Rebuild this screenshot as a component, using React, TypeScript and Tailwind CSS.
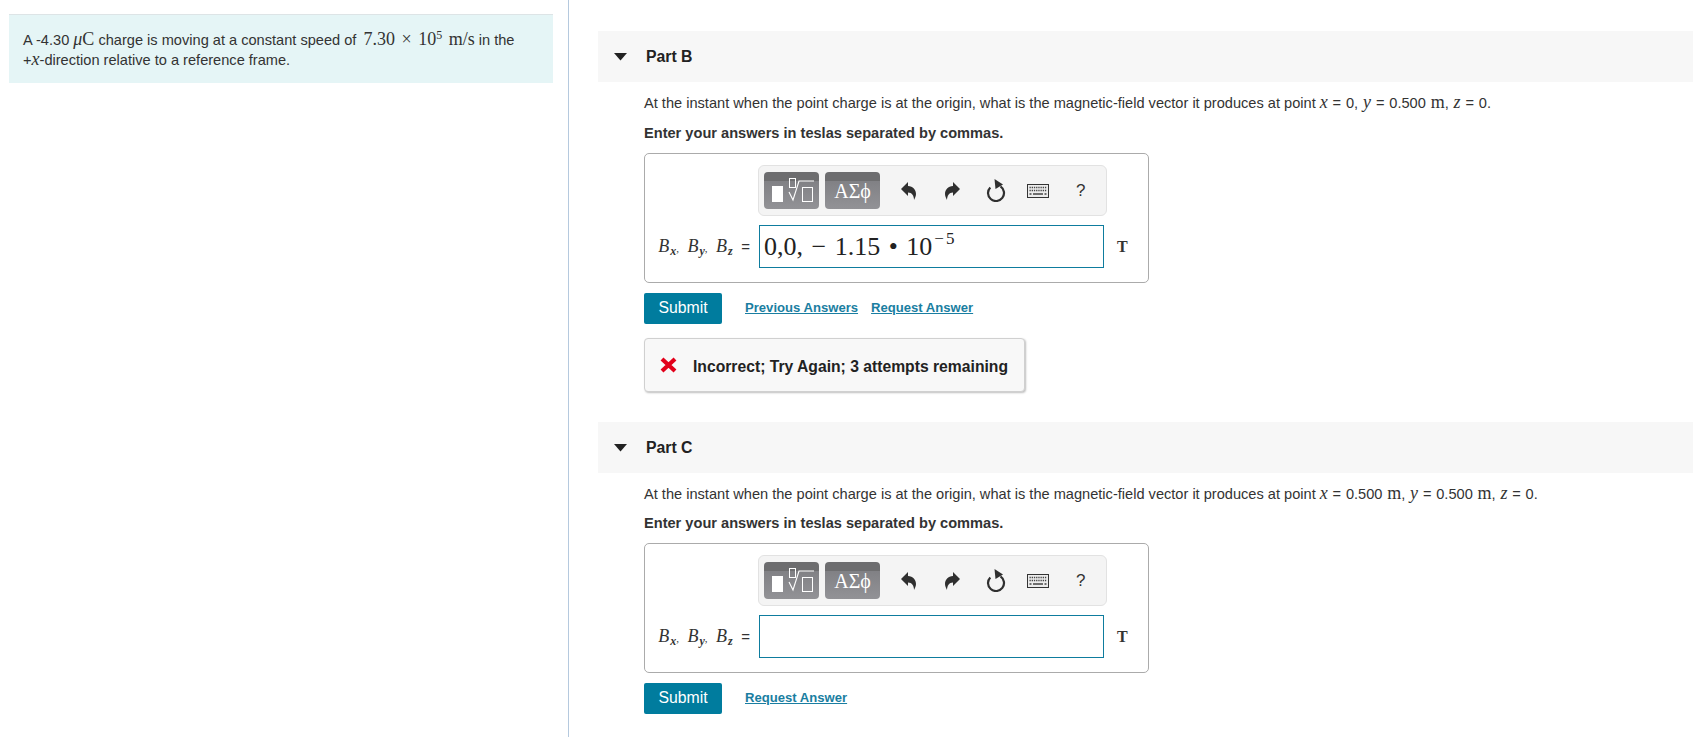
import type { ReactNode } from 'react'

function M({ children }: { children: ReactNode }) {
  return <span className="font-['Liberation_Serif',serif] text-[18px] leading-none">{children}</span>
}

function V({ children }: { children: ReactNode }) {
  return <i className="font-['Liberation_Serif',serif] text-[18px] leading-none">{children}</i>
}

function Toolbar() {
  return (
    <div className="ml-[113px] flex h-[51px] w-[349px] items-center rounded-md border border-[#e2e2e2] bg-[#f4f4f4] pl-[5px]">
      <div className="h-[37px] w-[55px] rounded-[4px] bg-[linear-gradient(#6d6d6f_0%,#6d6d6f_25%,#818185_25%,#929296_100%)]">
        <svg width="55" height="37" viewBox="0 0 55 37" fill="none">
          <rect x="8" y="14" width="11" height="16" fill="#fff" />
          <rect x="25.5" y="6.5" width="6" height="9" stroke="#fff" />
          <path d="M25 20 L29 28 L35 9 H50" stroke="#fff" strokeWidth="1.1" />
          <rect x="38.5" y="15.5" width="10" height="14" stroke="#fff" />
        </svg>
      </div>
      <div className="ml-[6px] flex h-[37px] w-[55px] items-center justify-center rounded-[4px] bg-[linear-gradient(#6d6d6f_0%,#6d6d6f_25%,#818185_25%,#929296_100%)] font-['Liberation_Serif',serif] text-[20px] text-white">
        ΑΣϕ
      </div>
      <svg className="ml-[21px]" width="15" height="18" viewBox="0 0 15 18">
        <path d="M0 7 L7 0 V4 C12 4 15 8 15 12 C15 14 14 16 13 18 C13 14 11 10.5 7 10.5 V14 Z" fill="#2f2f2f" />
      </svg>
      <svg className="ml-[29px]" width="15" height="18" viewBox="0 0 15 18">
        <path d="M15 7 L8 0 V4 C3 4 0 8 0 12 C0 14 1 16 2 18 C2 14 4 10.5 8 10.5 V14 Z" fill="#2f2f2f" />
      </svg>
      <svg className="ml-[26px]" width="20" height="23" viewBox="0 0 20 23" fill="none">
        <path d="M4.3 8.4 A8 8 0 1 0 14.5 7.4" stroke="#2f2f2f" strokeWidth="2.2" />
        <path d="M8.5 0 L17 5.5 L9.5 10 Z" fill="#2f2f2f" />
      </svg>
      <svg className="ml-[21px]" width="22" height="14" viewBox="0 0 22 14" fill="none">
        <rect x="0.5" y="0.5" width="21" height="13" fill="#ececec" stroke="#333" />
        <path d="M2.5 3.5 H19.5 M2.5 6.5 H19.5" stroke="#444" strokeWidth="1.3" strokeDasharray="1.3 0.9" />
        <path d="M2.5 10 H4.5 M6 10 H16 M17.5 10 H19.5" stroke="#444" strokeWidth="1.3" />
      </svg>
      <span className="ml-[27px] text-[17px] text-[#333]">?</span>
    </div>
  )
}

function Sub({ children }: { children: ReactNode }) {
  return <sub className="ml-[1px] text-[12px] font-bold">{children}</sub>
}

function Comma() {
  return <span className="mr-[4px] text-[11px] not-italic">,</span>
}

function AnswerBox({ children }: { children?: ReactNode }) {
  return (
    <div className="h-[130px] w-[505px] rounded-[5px] border border-[#ababab] pt-[11px] text-[#333]">
      <Toolbar />
      <div className="mt-[9px] flex items-center">
        <div className="flex w-[114px] justify-end whitespace-nowrap pr-[9px] font-['Liberation_Serif',serif] text-[18px] italic">
          <span>
            B<Sub>x</Sub><Comma /> B<Sub>y</Sub><Comma /> B<Sub>z</Sub>{' '}
            <span className="ml-[4px] font-['Liberation_Sans',sans-serif] text-[15px] not-italic">=</span>
          </span>
        </div>
        <div className="flex h-[43px] w-[345px] items-center border border-[#0e7c9e] pl-[4px] font-['Liberation_Serif',serif] text-[26px] leading-none text-[#222] [word-spacing:2px]">
          {children}
        </div>
        <span className="ml-[13px] font-['Liberation_Serif',serif] text-[16px] font-bold">T</span>
      </div>
    </div>
  )
}

function PartHeader({ name }: { name: string }) {
  return (
    <div className="flex h-[51px] items-center bg-[#f7f7f7] pl-[16px]">
      <svg width="13" height="8" viewBox="0 0 13 8">
        <path d="M0 0 H13 L6.5 7.5 Z" fill="#222" />
      </svg>
      <span className="ml-[19px] text-[15.8px] font-bold text-[#222]">{name}</span>
    </div>
  )
}

function Btn() {
  return (
    <button className="flex h-[31px] w-[78px] items-center justify-center rounded-[2px] bg-[#007c9e] pb-[2px] text-[15.8px] text-white">
      Submit
    </button>
  )
}

function Link({ children }: { children: ReactNode }) {
  return <a className="text-[13.1px] font-bold text-[#1a7ea1] underline">{children}</a>
}

export default function App() {
  return (
    <div className="flex h-[737px] overflow-hidden bg-white font-['Liberation_Sans',Arial,sans-serif] text-[14.6px] text-[#333]">
      <div className="w-[569px] shrink-0 border-r border-[#b5c9de] pl-[9px] pt-[14px]">
        <div className="h-[69px] w-[544px] border-t border-[#dde4e6] bg-[#e5f5f6] px-[14px] pt-[15px] leading-[19px]">
          A -4.30 <V>μ</V>
          <M>C</M> charge is moving at a constant speed of{' '}
          <span className="ml-[3px] [word-spacing:2px]">
            <M>7.30 × 10<sup className="text-[12px]">5</sup> m/s</M>
          </span>{' '}
          in the
          <br />+<V>x</V>-direction relative to a reference frame.
        </div>
      </div>

      <div className="min-w-0 flex-1 pl-[29px] pt-[31px]">
        <PartHeader name="Part B" />
        <div className="pl-[46px]">
          <p className="mt-[11px] leading-[20px]">
            At the instant when the point charge is at the origin, what is the magnetic-field vector it produces at point{' '}
            <span className="[word-spacing:0.8px]">
              <V>x</V> = 0, <V>y</V> = 0.500 <M>m</M>, <V>z</V> = 0.
            </span>
          </p>
          <p className="mt-[10px] font-bold leading-[20px]">Enter your answers in teslas separated by commas.</p>
          <div className="mt-[10px]">
            <AnswerBox>
              0,0, − 1.15 • 10
              <span className="mb-[16px] ml-[2px] text-[17px] [word-spacing:-2px]">− 5</span>
            </AnswerBox>
          </div>
          <div className="mt-[10px] flex items-center">
            <Btn />
            <div className="ml-[23px] flex gap-[13px] pb-[2px]">
              <Link>Previous Answers</Link>
              <Link>Request Answer</Link>
            </div>
          </div>
          <div className="mt-[14px] flex h-[54px] w-[381px] items-center rounded-[4px] border border-[#d0d0d0] bg-[#f8f8f8] pl-[15px] shadow-[1px_1px_2px_rgba(0,0,0,0.25)]">
            <svg width="17" height="16" viewBox="0 0 17 16">
              <path d="M2 2 L15 14 M15 2 L2 14" stroke="#e2001a" strokeWidth="4.2" />
            </svg>
            <span className="ml-[16px] pt-[3px] text-[15.7px] font-bold text-[#222]">Incorrect; Try Again; 3 attempts remaining</span>
          </div>
        </div>

        <div className="mt-[30px]">
          <PartHeader name="Part C" />
        </div>
        <div className="pl-[46px]">
          <p className="mt-[11px] leading-[20px]">
            At the instant when the point charge is at the origin, what is the magnetic-field vector it produces at point{' '}
            <span className="[word-spacing:0.75px]">
              <V>x</V> = 0.500 <M>m</M>, <V>y</V> = 0.500 <M>m</M>, <V>z</V> = 0.
            </span>
          </p>
          <p className="mt-[9px] font-bold leading-[20px]">Enter your answers in teslas separated by commas.</p>
          <div className="mt-[10px]">
            <AnswerBox />
          </div>
          <div className="mt-[10px] flex items-center">
            <Btn />
            <div className="ml-[23px] flex pb-[2px]">
              <Link>Request Answer</Link>
            </div>
          </div>
        </div>
      </div>
    </div>
  )
}
